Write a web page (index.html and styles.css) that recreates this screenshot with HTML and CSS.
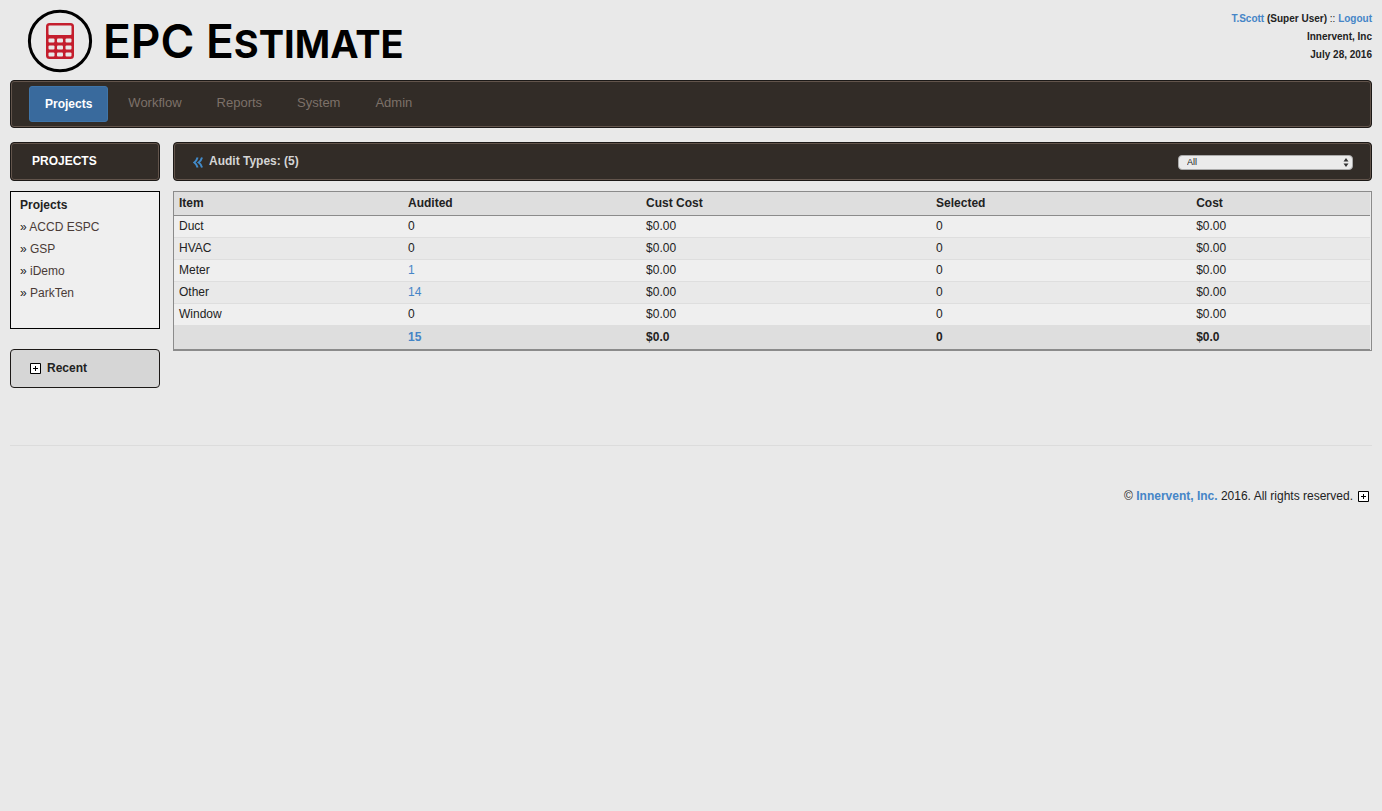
FILE: index.html
```html
<!DOCTYPE html>
<html lang="en">
<head>
<meta charset="utf-8">
<title>EPC Estimate</title>
<link rel="stylesheet" href="styles.css">
</head>
<body>
<header class="header">
  <div class="brand">
    <svg class="brand-mark" viewBox="0 0 66 64" aria-hidden="true">
      <ellipse cx="33" cy="32" rx="30.6" ry="29.8" fill="none" stroke="#000" stroke-width="3"/>
      <rect x="19" y="14" width="28" height="36" rx="3.5" fill="#c41e2d"/>
      <rect x="21.500" y="16.500" width="23" height="9.500" rx="1" fill="#e9e9e9"/>
      <g fill="#e9e9e9">
        <rect x="21.500" y="29.500" width="6" height="4" rx="1"/><rect x="30" y="29.500" width="6" height="4" rx="1"/><rect x="38.500" y="29.500" width="6" height="4" rx="1"/>
        <rect x="21.500" y="36.500" width="6" height="4" rx="1"/><rect x="30" y="36.500" width="6" height="4" rx="1"/><rect x="38.500" y="36.500" width="6" height="4" rx="1"/>
        <rect x="21.500" y="43.500" width="6" height="4" rx="1"/><rect x="30" y="43.500" width="6" height="4" rx="1"/><rect x="38.500" y="43.500" width="6" height="4" rx="1"/>
      </g>
    </svg>
    <span class="brand-name">EPC E<span class="brand-small">STIMATE</span></span>
  </div>
  <div class="account">
    <div><a href="#">T.Scott</a> (Super User) <span class="sep">::</span> <a href="#">Logout</a></div>
    <div>Innervent, Inc</div>
    <div>July 28, 2016</div>
  </div>
</header>

<nav class="nav bar">
  <a class="nav-link active" href="#">Projects</a>
  <a class="nav-link" href="#">Workflow</a>
  <a class="nav-link" href="#">Reports</a>
  <a class="nav-link" href="#">System</a>
  <a class="nav-link" href="#">Admin</a>
</nav>

<div class="layout">
  <aside class="sidebar">
    <h2 class="bar title-bar side-title">PROJECTS</h2>
    <section class="projects">
      <h3 class="projects-title">Projects</h3>
      <ul class="project-list">
        <li>» <a href="#">ACCD ESPC</a></li>
        <li>» <a href="#">GSP</a></li>
        <li>» <a href="#">iDemo</a></li>
        <li>» <a href="#">ParkTen</a></li>
      </ul>
    </section>
    <button class="recent" type="button">
      <svg class="plus" viewBox="0 0 11 11" aria-hidden="true"><path d="M.5.500h10v10H.5z" fill="#fff" stroke="#000"/><path d="M3 5.500h5M5.500 3v5" stroke="#000"/></svg>
      <span>Recent</span>
    </button>
  </aside>

  <main class="main">
    <div class="bar title-bar main-title">
      <a class="back" href="#" aria-label="Back"><svg class="back-icon" viewBox="0 0 10 11" aria-hidden="true"><path d="M4.600.5Q3.500 4 1.300 5.500 3.500 7 4.600 10.500M9 .5Q8 4 5.700 5.500 8 7 9 10.500" fill="none" stroke="#428bca" stroke-width="2"/></svg></a>
      <h1 class="heading">Audit Types: (5)</h1>
      <div class="select-wrap">
        <select class="filter" aria-label="Audit type"><option>All</option></select>
        <svg class="arrows" viewBox="0 0 6 9" aria-hidden="true"><path d="M3 0 5.500 3.500H.5zM3 9 .5 5.500h5z" fill="#333"/></svg>
      </div>
    </div>
    <div class="table-frame">
      <table class="audit">
        <colgroup><col class="c-item"><col class="c-audited"><col class="c-cust"><col class="c-selected"><col></colgroup>
        <thead><tr><th>Item</th><th>Audited</th><th>Cust Cost</th><th>Selected</th><th>Cost</th></tr></thead>
        <tbody>
          <tr><td>Duct</td><td>0</td><td>$0.00</td><td>0</td><td>$0.00</td></tr>
          <tr><td>HVAC</td><td>0</td><td>$0.00</td><td>0</td><td>$0.00</td></tr>
          <tr><td>Meter</td><td><a href="#">1</a></td><td>$0.00</td><td>0</td><td>$0.00</td></tr>
          <tr><td>Other</td><td><a href="#">14</a></td><td>$0.00</td><td>0</td><td>$0.00</td></tr>
          <tr><td>Window</td><td>0</td><td>$0.00</td><td>0</td><td>$0.00</td></tr>
        </tbody>
        <tfoot><tr><td></td><td><a href="#">15</a></td><td>$0.0</td><td>0</td><td>$0.0</td></tr></tfoot>
      </table>
    </div>
  </main>
</div>

<footer class="footer">
  <span>© <a class="company" href="#">Innervent, Inc.</a> 2016. All rights reserved.</span>
  <button class="expand" type="button" aria-label="Expand"><svg class="plus" viewBox="0 0 11 11" aria-hidden="true"><path d="M.5.500h10v10H.5z" fill="#fff" stroke="#000"/><path d="M3 5.500h5M5.500 3v5" stroke="#000"/></svg></button>
</footer>
</body>
</html>
```
FILE: styles.css
```css
* { box-sizing: border-box; }

body {
  margin: 0;
  padding: 0 10px;
  background: #e9e9e9;
  color: #222;
  font: 12px/18px "Liberation Sans", Arial, sans-serif;
}

a { color: #4585c7; text-decoration: none; }
h1, h2, h3, ul { margin: 0; padding: 0; font-size: 12px; }
svg { display: block; }

.header {
  display: flex;
  justify-content: space-between;
  align-items: flex-start;
  height: 80px;
  padding-top: 9px;
}
.brand { display: flex; align-items: flex-start; gap: 10px; padding-left: 17px; }
.brand-mark { width: 66px; height: 64px; }
.brand-name {
  color: #000;
  font: 600 46px/64px Inter, Lato, sans-serif;
  white-space: nowrap;
}
.brand-small { font-size: 38px; font-weight: 700; line-height: 1; }

.account {
  padding-top: 1px;
  font-size: 10px;
  font-weight: bold;
  text-align: right;
}
.sep { font-weight: normal; }

.bar {
  display: flex;
  align-items: center;
  background: #322c27;
  border: 1px solid #1c1917;
  border-radius: 4px;
  box-shadow: inset 0 0 0 1px #62544b;
}

.nav { height: 48px; padding: 0 18px; gap: 5px; }
.nav-link {
  padding: 8px 15px 10px;
  color: #7d7169;
  font-size: 13px;
}
.nav-link.active {
  padding: 8px 15px;
  border: 1px solid #3f75a9;
  border-radius: 3px;
  background: #396a9d;
  color: #fff;
  font-size: 12px;
  font-weight: bold;
}

.layout {
  display: grid;
  grid-template-columns: 150px 1fr;
  gap: 13px;
  margin-top: 14px;
}
.title-bar { height: 39px; margin-bottom: 10px; padding-bottom: 2px; }
.side-title { padding-left: 21px; color: #fff; }

.projects {
  height: 138px;
  padding: 4px 9px;
  border: 1px solid #000;
  background: #efefef;
}
.projects-title { margin-bottom: 2px; line-height: 18px; }
.project-list { list-style: none; line-height: 22px; }
.project-list a { color: #4a3b37; }

.recent {
  display: flex;
  align-items: center;
  gap: 6px;
  width: 100%;
  height: 39px;
  margin-top: 20px;
  padding: 0 19px;
  border: 1px solid #1c1917;
  border-radius: 4px;
  background: #d6d6d6;
  color: #222;
  font: bold 12px/18px "Liberation Sans", Arial, sans-serif;
}
.recent span { padding-bottom: 2px; }
.plus { width: 11px; height: 11px; }

.main-title { padding-left: 19px; padding-right: 18px; }
.back { padding-top: 3px; }
.back-icon { width: 10px; height: 11px; }
.heading { margin-left: 6px; color: #d5d5d5; }
.select-wrap { position: relative; margin-left: auto; padding-top: 3px; }
.filter {
  display: block;
  width: 175px;
  height: 15px;
  padding: 0 8px;
  appearance: none;
  border: 1px solid #aaa;
  border-radius: 4px;
  background: #ebebeb;
  color: #222;
  font: 9px/13px "Liberation Sans", Arial, sans-serif;
}
.arrows {
  position: absolute;
  right: 4px;
  top: 6px;
  width: 6px;
  height: 9px;
  pointer-events: none;
}

.table-frame {
  padding-right: 1px;
  border: 1px solid #8b8b8b;
}
.audit { width: 100%; table-layout: fixed; border-collapse: separate; border-spacing: 0; }
.c-item { width: 19.15%; }
.c-audited { width: 19.9%; }
.c-cust { width: 24.25%; }
.c-selected { width: 21.75%; }
.audit th, .audit td { padding: 0 5px; text-align: left; }
.audit th {
  height: 24px;
  padding-bottom: 2px;
  border-bottom: 1px solid #8b8b8b;
  background: #dedede;
}
.audit tbody td { height: 22px; padding-bottom: 1px; border-bottom: 1px solid #dedede; }
.audit tbody tr:nth-child(odd) { background: #efefef; }
.audit tfoot td {
  height: 24px;
  padding-bottom: 2px;
  border-bottom: 1px solid #8b8b8b;
  background: #dedede;
  font-weight: bold;
}

.footer {
  display: flex;
  justify-content: flex-end;
  align-items: center;
  gap: 5px;
  margin-top: 57px;
  padding: 41px 3px 20px;
  border-top: 1px solid #dcdcdc;
}
.company { font-weight: bold; }
.expand { padding: 0; border: 0; background: none; }
```
